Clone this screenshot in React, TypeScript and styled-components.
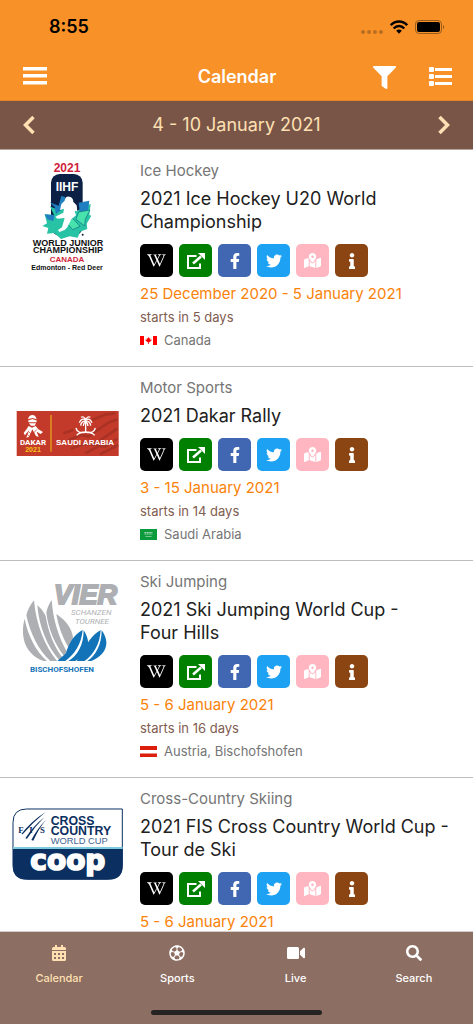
import React from "react";
import styled, { createGlobalStyle } from "styled-components";
import {
  FaFacebookF,
  FaFilter,
  FaInfo,
  FaMapMarkedAlt,
  FaRegFutbol,
  FaSearch,
  FaTwitter,
  FaWikipediaW,
} from "react-icons/fa";

const GlobalStyle = createGlobalStyle`
  *, *::before, *::after { box-sizing: border-box; }
  body { margin: 0; background: #fff; font-family: Inter, "Liberation Sans", sans-serif; }
  h1, h2, p, ul { margin: 0; padding: 0; font-weight: 400; }
  button { border: 0; padding: 0; background: none; color: inherit; font: inherit; }
  a { color: inherit; text-decoration: none; }
  svg { display: block; }
`;

const Screen = styled.div`
  display: flex;
  flex-direction: column;
  height: 100vh;
  overflow: hidden;
`;

const Header = styled.header`
  flex: none;
  background: #f79128;
  border-bottom: 1px solid #e28427;
`;

const StatusBar = styled.div`
  display: flex;
  align-items: center;
  justify-content: space-between;
  height: 54px;
  padding: 0 28px 0 49px;
  color: #000;
`;

const Clock = styled.time`
  font-size: 18px;
  line-height: 22px;
  font-weight: 600;
`;

const Indicators = styled.div`
  display: flex;
  align-items: center;
  gap: 7px;
`;

const TitleBar = styled.div`
  display: grid;
  grid-template-columns: 1fr auto 1fr;
  align-items: center;
  height: 46px;
  padding: 0 21px 0 22px;
  color: #fff;
`;

const Title = styled.h1`
  font-size: 18px;
  line-height: 24px;
  font-weight: 600;
`;

const Actions = styled.div`
  display: flex;
  align-items: center;
  justify-content: flex-end;
  gap: 32px;
`;

const IconButton = styled.button`
  display: flex;
  align-items: center;
`;

const WeekBar = styled.nav`
  flex: none;
  display: flex;
  align-items: center;
  justify-content: space-between;
  height: 49px;
  padding: 0 23px;
  background: #795548;
  color: #ffe0b2;
  border-bottom: 1px solid #b5a49d;
`;

const Week = styled.p`
  font-size: 18px;
  line-height: 24px;
`;

const EventList = styled.ul`
  flex: 1;
  min-height: 0;
  overflow-y: auto;
  list-style: none;
  scrollbar-width: none;
`;

const EventRow = styled.li`
  display: flex;
  align-items: flex-start;
  gap: 16px;
  padding: 11px 12px 17px;
  border-bottom: 1px solid #bdbdbd;
`;

const LogoBox = styled.div`
  flex: none;
  width: 112px;
  height: 112px;
`;

const Details = styled.div`
  flex: 1;
  min-width: 0;
`;

const Sport = styled.p`
  font-size: 15px;
  line-height: 20px;
  color: #757575;
`;

const EventTitle = styled.h2`
  margin-top: 6px;
  font-size: 18px;
  line-height: 23px;
  color: #212121;
`;

const Links = styled.div`
  display: flex;
  gap: 6px;
  margin-top: 11px;
`;

const LinkTile = styled.a<{ $color: string }>`
  display: flex;
  align-items: center;
  justify-content: center;
  width: 33px;
  height: 33px;
  border-radius: 5px;
  background: ${(p) => p.$color};
  color: #fff;
`;

const Dates = styled.p`
  margin-top: 6px;
  font-size: 15px;
  line-height: 22px;
  color: #fb8208;
`;

const Countdown = styled.p`
  margin-top: 3px;
  font-size: 13px;
  line-height: 18px;
  color: #7f5c50;
`;

const Location = styled.p`
  display: flex;
  align-items: center;
  gap: 7px;
  margin-top: 5px;
  font-size: 13px;
  line-height: 18px;
  color: #757575;
`;

const BottomBar = styled.footer`
  flex: none;
  display: flex;
  flex-direction: column;
  align-items: center;
  justify-content: space-between;
  height: 93px;
  padding-bottom: 9px;
  border-top: 1px solid #d5cdca;
  background: #8d6e63;
`;

const Tabs = styled.nav`
  display: flex;
  align-self: stretch;
`;

const Tab = styled.a<{ $active?: boolean }>`
  flex: 1;
  display: flex;
  flex-direction: column;
  align-items: center;
  gap: 8px;
  padding-top: 12px;
  font-size: 11px;
  line-height: 16px;
  font-weight: 500;
  color: ${(p) => (p.$active ? "#ffe0b2" : "#fff")};
`;

const TabIcon = styled.span`
  display: flex;
  align-items: center;
  height: 18px;
`;

const HomeIndicator = styled.div`
  width: 36%;
  height: 5px;
  border-radius: 3px;
  background: #262423;
`;

const SANS = '"Liberation Sans", sans-serif';
const NARROW = "Roboto, sans-serif";
const WIDE = '"DejaVu Sans", sans-serif';

const SignalDots = () => (
  <svg width="22" height="14" viewBox="0 0 22 14" fill="#b96d20" aria-hidden="true">
    <circle cx="2" cy="12" r="2" />
    <circle cx="8" cy="12" r="2" />
    <circle cx="14" cy="12" r="2" />
    <circle cx="20" cy="12" r="2" />
  </svg>
);

const Wifi = () => (
  <svg width="18" height="14" viewBox="0 0 18 14" fill="none" stroke="#000" strokeWidth="2.5" aria-hidden="true">
    <path d="M.8 5.200C5.400.3 12.600.3 17.200 5.200" />
    <path d="M3.700 8.500c3-3.200 7.600-3.200 10.600 0" />
    <path d="M6.200 10.800c1.600-1.600 4-1.600 5.600 0L9 13.700z" fill="#000" stroke="none" />
  </svg>
);

const Battery = () => (
  <svg width="30" height="14" viewBox="0 0 30 14" aria-hidden="true">
    <rect x=".5" y=".5" width="26" height="13" rx="3.500" fill="none" stroke="#9a5c1c" />
    <rect x="2" y="2" width="23" height="10" rx="2" fill="#000" />
    <path d="M28 5c1.600.6 1.600 3.400 0 4z" fill="#9a5c1c" />
  </svg>
);

const MenuIcon = () => (
  <svg width="26" height="20" viewBox="0 0 26 20" fill="#fff" aria-hidden="true">
    <path d="M1 0h24v3.500H1zM1 7h24v3.500H1zM1 14h24v3.500H1z" />
  </svg>
);

const ListIcon = () => (
  <svg width="24" height="20" viewBox="0 0 24 20" fill="#fff" aria-hidden="true">
    <rect x="1" y="0" width="5" height="5" rx="1" />
    <rect x="1" y="7" width="5" height="5" rx="1" />
    <rect x="1" y="14" width="5" height="5" rx="1" />
    <path d="M7 1h17v3H7zM7 8h17v3H7zM7 15h17v3H7z" />
  </svg>
);

const Chevron = ({ d }: { d: string }) => (
  <svg width="12" height="20" viewBox="0 0 12 20" fill="none" stroke="currentColor" strokeWidth="3.500" aria-hidden="true">
    <path d={d} />
  </svg>
);

const ExternalIcon = () => (
  <svg width="18" height="16" viewBox="0 0 18 16" fill="none" stroke="currentColor" strokeWidth="2" aria-hidden="true">
    <path d="M9.500 3H1v12h12v-4.500" />
    <path d="M6 10.500 14 3.500" strokeWidth="2.500" />
    <path d="M11 0h7v7z" fill="currentColor" stroke="none" />
  </svg>
);

const CalendarIcon = () => (
  <svg width="14" height="16" viewBox="0 0 14 16" fill="currentColor" fillRule="evenodd" aria-hidden="true">
    <path d="M3 0h2v2h4V0h2v2h1.500Q14 2 14 3.500V5H0V3.500Q0 2 1.500 2H3zM0 6h14v8.500q0 1.500-1.500 1.500h-11Q0 16 0 14.500zM2 8v2h2V8zM6 8v2h2V8zM10 8v2h2V8zM2 12v2h2v-2zM6 12v2h2v-2zM10 12v2h2v-2z" />
  </svg>
);

const VideoIcon = () => (
  <svg width="18" height="12" viewBox="0 0 18 12" fill="currentColor" aria-hidden="true">
    <rect width="12" height="12" rx="1.500" />
    <path d="M13 4.200 16.400.9c.7-.5 1.600-.2 1.600.6v9c0 .8-.9 1.100-1.600.6L13 7.800z" />
  </svg>
);

const HockeyLogo = () => (
  <svg width="112" height="112" viewBox="0 0 112 112" fontFamily={SANS} fontWeight="700" textAnchor="middle">
    <text x="55" y="11" fontSize="12" fill="#d01f3c">2021</text>
    <g transform="translate(-12 -11) scale(.3333)">
      <rect x="153" y="72" width="95" height="185" rx="26" fill="#0c1f45" />
      <path d="M134 193l28 2-12-26 30 14 14-38 14 22 14-10 8 26 42-22-4 34 6 2-14 24 2 16-22 8-7 18-24-4-26 8-20-18-22 2 4-17-18-6 14-8z" fill="#27c3a4" />
      <path d="M149 157l27 10 8-29 12 3-6 32-22 20-4-22zM236 158l32-6-4 30-24 9zM160 213l-18-5-8-15 30 3z" fill="#1f7fc0" />
      <path d="M236 186l34-6-14 28-2 20-26-20zM196 213l22-8 22 24-22 10z" fill="#48e3ad" stroke="#0d6d80" strokeWidth="2" />
      <path d="M194 152q2-14 14-12 12 2 12 16l10 10 2 18-8-2 4 14-14 12-12 24-8 8-16 6-4-6 12-8 8-28-22 2-6-6 24-12 2-12-12 4 4-18z" fill="#fff" />
      <circle cx="248" cy="254" r="3" fill="#0c1f45" />
    </g>
    <text x="55" y="30" fontSize="12" fill="#fff">IIHF</text>
    <g fill="#111">
      <text x="56" y="85" fontSize="9">WORLD JUNIOR</text>
      <text x="56" y="92" fontSize="9">CHAMPIONSHIP</text>
      <text x="55" y="109" fontSize="7">Edmonton - Red Deer</text>
    </g>
    <text x="55" y="101" fontSize="8" fill="#d01f3c">CANADA</text>
  </svg>
);

const DakarLogo = () => (
  <svg width="112" height="112" viewBox="0 0 112 112" fontFamily={SANS} fontWeight="700" textAnchor="middle">
    <rect x="4.700" y="33" width="102" height="45" fill="#c43a2a" />
    <g transform="translate(-12 -8) scale(.3333)">
      <g fill="none" stroke="#a93224" strokeWidth="8">
        <path d="M205 210l40-15 20 5 60-42 28-10M212 236l40-14 30 2 70-48M256 250l40-22 20 2 36-24M300 253l54-28M276 150l40-16 30-4M190 190l30-10" />
      </g>
      <path d="M153 135v110" stroke="#dc8d1e" strokeWidth="5" />
      <g fill="#fff">
        <path d="M84 148q3-13 13-13t13 13l-13-4zM84 152l13-5 14 5-2 5H86zM87 160h21l-4 7H93z" />
        <path d="M86 168l10 5 11-5 8 10 14 8-7 6-12-7 6 16-8-3-11-20-10 22-8 3 8-22-12 15-4-7 9-12z" />
      </g>
      <path d="M84 184l20 17M111 178L90 200M78 190l12 10" stroke="#c43a2a" strokeWidth="2" />
      <g fill="none" stroke="#fff" strokeWidth="4">
        <path d="M257 144v42M257 150q-12-8-19 8M257 150q12-8 19 8M257 152q-14 2-15 15M257 152q14 2 15 15M257 148q-7-11-14-6M257 148q7-11 14-6M257 154q-7 6-7 14M257 154q7 6 7 14" />
        <path d="M228 174q4 18 29 12 20 1 27 10M286 174q-4 18-29 12-20 1-27 10" />
      </g>
    </g>
    <text x="21" y="67" fontFamily={NARROW} fontSize="8" fill="#fff">DAKAR</text>
    <text x="21" y="74" fontSize="7" fill="#f5c518">2021</text>
    <text x="73" y="67" fontSize="8" fill="#fff">SAUDI ARABIA</text>
  </svg>
);

const FourHillsLogo = () => (
  <svg width="112" height="112" viewBox="0 0 112 112" fontFamily={NARROW}>
    <g fill="#adafb2">
      <text x="42" y="32" fontFamily={SANS} fontSize="27" fontWeight="700" fontStyle="italic" stroke="#adafb2" strokeWidth="2">VIER</text>
      <text x="59" y="43" fontSize="8" fontStyle="italic">SCHANZEN</text>
      <text x="63" y="52" fontSize="8" fontStyle="italic">TOURNEE</text>
    </g>
    <g transform="translate(3 6) scale(.3333)" fill="#adafb2">
      <path d="M29 122C18 160 20 225 86 249h10C64 222 38 172 29 122z" />
      <path d="M57 67C46 80 37 97 34 112c12 54 36 104 72 137h20C90 205 63 140 57 67z" />
      <path d="M67 82c5 64 30 124 66 165l9-9C118 206 100 164 92 114 85 100 77 90 67 82z" />
      <path d="M110 66c-8 12-14 25-16 38 6 50 26 94 53 130l10-10C130 176 114 124 110 66z" />
      <path d="M124 108c7 40 20 74 40 106l10-18c4-34-16-66-50-88z" />
    </g>
    <g transform="translate(-12 -12) scale(.3333)" fill="#1273b8">
      <path d="M248 210c-28 14-44 46-50 70l-26 23h24c28-20 48-50 52-93z" />
      <path d="M251 211c0 44-18 76-46 92h20c36-12 54-50 26-92z" />
      <path d="M302 210c-28 16-46 46-58 78l-14 15h24c28-20 46-52 48-93z" />
      <path d="M305 211c0 44-18 76-43 92h12c38-14 62-50 31-92z" />
    </g>
    <text x="18" y="100" fontSize="8" fontWeight="700" fill="#1273b8">BISCHOFSHOFEN</text>
  </svg>
);

const CrossCountryLogo = () => (
  <svg width="112" height="112" viewBox="0 0 112 112" fontFamily={WIDE}>
    <g transform="translate(-12 -9) scale(.3333)">
      <path d="M80 87h287v170q0 41-41 41H80q-41 0-41-41V128q0-41 41-41z" fill="#fff" stroke="#0b2f60" strokeWidth="3" />
      <path d="M39 206h329v51q0 41-41 41H80q-41 0-41-41z" fill="#0b2f60" />
      <path d="M39 201h329v6H39z" fill="#7ccbdc" />
      <g fill="#0b2f60">
        <path d="M136 97Q96 122 64 162l4 1Q98 128 136 97zM133 112Q100 138 76 175l5 1Q104 140 133 112zM138 119Q110 148 94 180l6 2Q116 146 138 119z" />
        <g fontFamily='"Liberation Serif", serif' fontWeight="700" fontSize="26">
          <text x="55" y="160">F</text>
          <text x="88" y="160">I</text>
          <text x="120" y="160">S</text>
        </g>
        <g fontFamily={SANS} fontWeight="700" fontSize="37">
          <text x="152" y="134">CROSS</text>
          <text x="152" y="166">COUNTRY</text>
        </g>
      </g>
      <text x="152" y="191" fontFamily={SANS} fontSize="28" fill="#41658f">WORLD CUP</text>
      <text x="91" y="270" fontSize="84" fontWeight="700" fill="#fff" stroke="#fff" strokeWidth="5">coop</text>
    </g>
  </svg>
);

const CanadaFlag = () => (
  <svg width="17" height="9" viewBox="0 0 17 9" aria-hidden="true">
    <path d="M0 0h17v9H0z" fill="#fff" />
    <path d="M0 0h4v9H0zM13 0h4v9h-4zM8.500 1l.9 1.500.9-.3-.2 1.500 1.500-.2-.3 1.300-2 1.500H8.900V8h-.8V6.300H7.700l-2-1.500-.3-1.300 1.500.2-.2-1.500.9.3z" fill="#f00" />
  </svg>
);

const SaudiFlag = () => (
  <svg width="17" height="11" viewBox="0 0 17 11" aria-hidden="true">
    <path d="M0 0h17v11H0z" fill="#0b9a3c" />
    <path d="M4.500 3.500h8M4.500 5h8" stroke="#a8dcb8" strokeWidth="1.200" strokeDasharray="1.500 .4" />
    <path d="M5.500 7.500h6" stroke="#a8dcb8" strokeWidth=".7" />
  </svg>
);

const AustriaFlag = () => (
  <svg width="17" height="11" viewBox="0 0 17 11" aria-hidden="true">
    <path d="M0 0h17v11H0z" fill="#fff" />
    <path d="M0 0h17v4H0zM0 7.500h17V11H0z" fill="#dc1f0c" />
  </svg>
);

const links = [
  { label: "Wikipedia", color: "#000", icon: <FaWikipediaW size={19} /> },
  { label: "Website", color: "#008000", icon: <ExternalIcon /> },
  { label: "Facebook", color: "#4267b2", icon: <FaFacebookF size={16} /> },
  { label: "Twitter", color: "#1da1f2", icon: <FaTwitter size={16} /> },
  { label: "Map", color: "#ffb6c1", icon: <FaMapMarkedAlt size={17} /> },
  { label: "Information", color: "#8b4513", icon: <FaInfo size={16} /> },
];

interface SportEvent {
  sport: string;
  title: string;
  dates: string;
  logo: React.ReactNode;
  countdown?: string;
  flag?: React.ReactNode;
  place?: string;
}

const events: SportEvent[] = [
  {
    sport: "Ice Hockey",
    title: "2021 Ice Hockey U20 World Championship",
    dates: "25 December 2020 - 5 January 2021",
    logo: <HockeyLogo />,
    countdown: "starts in 5 days",
    flag: <CanadaFlag />,
    place: "Canada",
  },
  {
    sport: "Motor Sports",
    title: "2021 Dakar Rally",
    dates: "3 - 15 January 2021",
    logo: <DakarLogo />,
    countdown: "starts in 14 days",
    flag: <SaudiFlag />,
    place: "Saudi Arabia",
  },
  {
    sport: "Ski Jumping",
    title: "2021 Ski Jumping World Cup - Four\u00a0Hills",
    dates: "5 - 6 January 2021",
    logo: <FourHillsLogo />,
    countdown: "starts in 16 days",
    flag: <AustriaFlag />,
    place: "Austria, Bischofshofen",
  },
  {
    sport: "Cross-Country Skiing",
    title: "2021 FIS Cross Country World Cup - Tour de Ski",
    dates: "5 - 6 January 2021",
    logo: <CrossCountryLogo />,
  },
];

const tabs = [
  { label: "Calendar", icon: <CalendarIcon /> },
  { label: "Sports", icon: <FaRegFutbol size={16} /> },
  { label: "Live", icon: <VideoIcon /> },
  { label: "Search", icon: <FaSearch size={16} /> },
];

export default function App() {
  return (
    <Screen>
      <GlobalStyle />
      <Header>
        <StatusBar>
          <Clock>8:55</Clock>
          <Indicators>
            <SignalDots />
            <Wifi />
            <Battery />
          </Indicators>
        </StatusBar>
        <TitleBar>
          <IconButton aria-label="Menu">
            <MenuIcon />
          </IconButton>
          <Title>Calendar</Title>
          <Actions>
            <IconButton aria-label="Filter">
              <FaFilter size={23} />
            </IconButton>
            <IconButton aria-label="List view">
              <ListIcon />
            </IconButton>
          </Actions>
        </TitleBar>
      </Header>
      <WeekBar aria-label="Week">
        <IconButton aria-label="Previous week">
          <Chevron d="M10.500 2 2.500 10l8 8" />
        </IconButton>
        <Week>4 - 10 January 2021</Week>
        <IconButton aria-label="Next week">
          <Chevron d="M1.500 2l8 8-8 8" />
        </IconButton>
      </WeekBar>
      <EventList>
        {events.map((event) => (
          <EventRow key={event.title}>
            <LogoBox>{event.logo}</LogoBox>
            <Details>
              <Sport>{event.sport}</Sport>
              <EventTitle>{event.title}</EventTitle>
              <Links>
                {links.map((link) => (
                  <LinkTile key={link.label} href="#" aria-label={link.label} $color={link.color}>
                    {link.icon}
                  </LinkTile>
                ))}
              </Links>
              <Dates>{event.dates}</Dates>
              {event.countdown && <Countdown>{event.countdown}</Countdown>}
              {event.place && (
                <Location>
                  {event.flag}
                  {event.place}
                </Location>
              )}
            </Details>
          </EventRow>
        ))}
      </EventList>
      <BottomBar>
        <Tabs aria-label="Main">
          {tabs.map((tab, i) => (
            <Tab key={tab.label} href="#" $active={i === 0}>
              <TabIcon>{tab.icon}</TabIcon>
              {tab.label}
            </Tab>
          ))}
        </Tabs>
        <HomeIndicator />
      </BottomBar>
    </Screen>
  );
}
